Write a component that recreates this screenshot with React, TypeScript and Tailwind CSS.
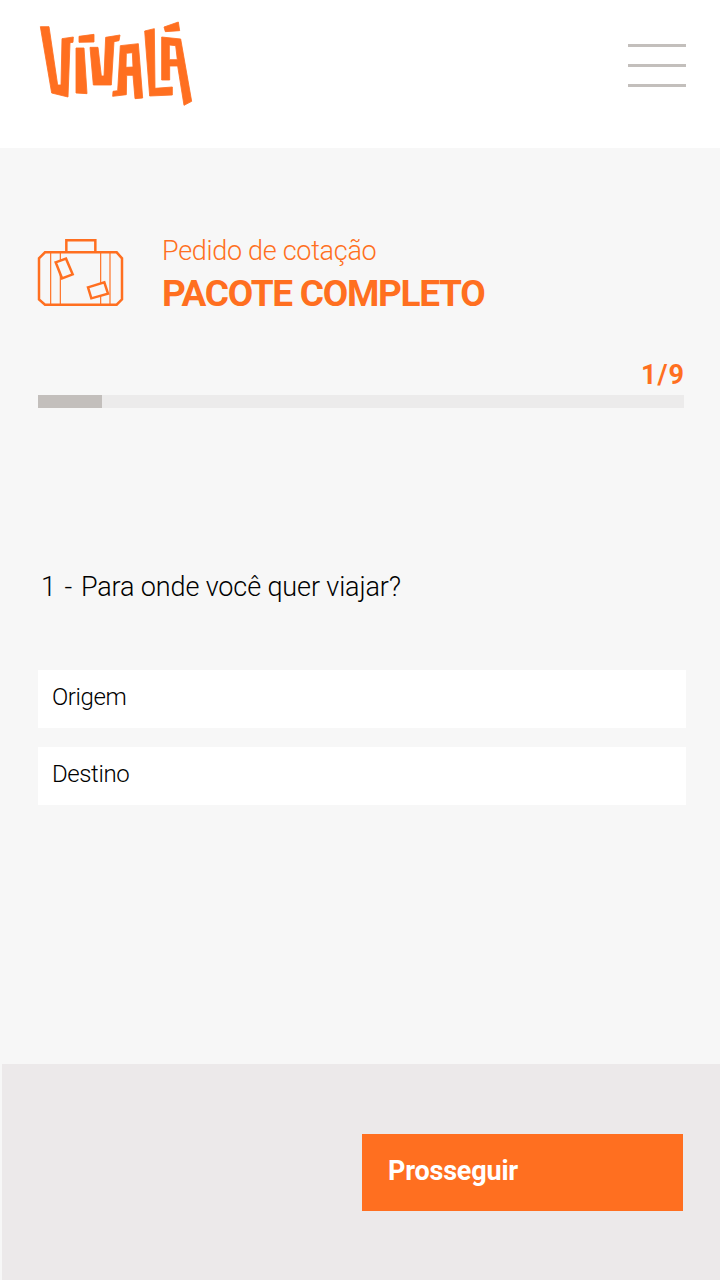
function Logo() {
  return (
    <svg className="h-[100px] w-[166px]" viewBox="0 0 498 300" fill="#ff6f20" stroke="#ff6f20" strokeWidth="2.5" fillRule="evenodd" aria-label="Vivalá">
      <path d="M31 50H57L83 225H93L96 86L130 81L129 97L120 98L114 261L65 249Z" />
      <path d="M147 79L192 73V96L147 97Z" />
      <path d="M138 114H162L171 251L138 249Z" />
      <path d="M180 112H204L214 198H222L227 82L270 75L267 92L252 95L244 225H190Z" />
      <path d="M271 107L325 101L338 264L315 266L309 196H290L289 254L248 259L249 244L263 242ZM289 130L307 128L309 171L288 172Z" />
      <path d="M344 63L373 56L375 235L427 231V255L359 258Z" />
      <path d="M402 51L445 36L449 62L406 65Z" />
      <path d="M395 81L452 87L485 274L462 286L443 168H419V210H395ZM418 105L437 107L442 149H418Z" />
    </svg>
  );
}

function Suitcase() {
  return (
    <svg className="h-[90px] w-[110px]" viewBox="0 0 330 270" fill="none" stroke="#ff6f20" strokeWidth="7.5">
      <path d="M45 67H260L276 85V208L260 224H45L27 208V85Z" />
      <path d="M109 67V31H196V67" />
      <path d="M62 67V224M91 67V224M212 67V224M240 67V224" strokeWidth="3.5" />
      <path d="M77 97L108 86L128 133L96 145Z" fill="#f7f7f7" />
      <path d="M174 172L223 157L234 191L184 205Z" fill="#f7f7f7" />
    </svg>
  );
}

function Field({ label }: { label: string }) {
  return (
    <div className="flex h-[58px] items-center bg-white pb-[4px] pl-[14px] text-[24px] font-light tracking-[-0.4px] text-black">
      {label}
    </div>
  );
}

export default function App() {
  return (
    <div className="flex h-[1280px] w-[720px] flex-col bg-[#f7f7f7] font-['Roboto','Liberation_Sans',sans-serif]">
      <header className="flex h-[148px] shrink-0 items-start justify-between bg-white pt-[10px] pr-[34px] pl-[30px]">
        <Logo />
        <button className="mt-[34px] flex w-[58px] flex-col gap-[17px]" aria-label="Menu">
          <span className="h-[3px] w-full bg-[#c3bfbc]" />
          <span className="h-[3px] w-full bg-[#c3bfbc]" />
          <span className="h-[3px] w-full bg-[#c3bfbc]" />
        </button>
      </header>
      <main className="flex flex-1 flex-col pr-[34px] pl-[38px]">
        <div className="-ml-[8px] flex h-[172px] pt-[82px] text-[#ff6f20]">
          <Suitcase />
          <div className="ml-[22px] pt-[5px] whitespace-nowrap">
            <p className="text-[27px] leading-[32px] font-light tracking-[-0.3px]">Pedido de cotação</p>
            <h1 className="pt-[5px] text-[37px] leading-[44px] font-bold tracking-[-1.3px]">PACOTE COMPLETO</h1>
          </div>
        </div>
        <div className="mr-[2px] pt-[39px]">
          <p className="-mr-px text-right text-[27px] leading-[32px] font-bold tracking-[1px] text-[#ff6f20]">1/9</p>
          <div className="mt-[4px] h-[13px] bg-[#ecebeb]">
            <div className="h-full w-[64px] bg-[#c3bfbc]" />
          </div>
        </div>
        <h2 className="pt-[163px] pl-[3px] text-[27px] leading-[32px] font-light tracking-[-0.13px] whitespace-nowrap text-black">
          <span className="tracking-[1px]">1 - </span>Para onde você quer viajar?
        </h2>
        <div className="mt-[67px] flex flex-col gap-[19px]">
          <Field label="Origem" />
          <Field label="Destino" />
        </div>
      </main>
      <footer className="ml-[2px] flex h-[216px] shrink-0 justify-end bg-[#ece9ea] pt-[70px] pr-[37px]">
        <button className="flex h-[77px] w-[321px] items-center bg-[#ff6f20] pb-[3px] pl-[26px] text-[27px] font-bold tracking-[-0.2px] text-white">
          Prosseguir
        </button>
      </footer>
    </div>
  );
}
